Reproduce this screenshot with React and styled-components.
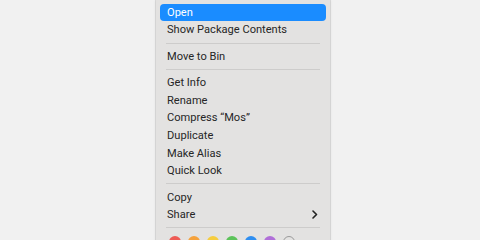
import React from "react";
import styled, { createGlobalStyle } from "styled-components";

const Global = createGlobalStyle`
  html, body { margin: 0; padding: 0; background: #f1f1f1; }
  body { width: 480px; height: 240px; overflow: hidden; font-family: "Roboto", "Liberation Sans", sans-serif; }
`;

const Page = styled.div`
  width: 480px;
  height: 240px;
  display: flex;
  justify-content: flex-start;
  padding-left: 156px;
  box-sizing: border-box;
  overflow: hidden;
`;

const Menu = styled.div`
  width: 174px;
  height: 260px;
  background: #e3e2e1;
  border-radius: 0 0 7px 7px;
  box-shadow: 0 0 0 1px rgba(0,0,0,0.08), 0 0 3px rgba(0,0,0,0.12);
  padding: 3.6px 4px 0 4px;
  box-sizing: border-box;
  display: flex;
  flex-direction: column;
`;

const Item = styled.div`
  height: 17.6px;
  display: flex;
  align-items: center;
  justify-content: space-between;
  padding: 0 8px 0 7px;
  border-radius: 4px;
  font-size: 11.1px;
  letter-spacing: 0;
  color: ${p => (p.$active ? "#ffffff" : "#262626")};
  background: ${p => (p.$active ? "#1a8cff" : "transparent")};
`;

const Sep = styled.div`
  height: 8.8px;
  display: flex;
  align-items: center;
  padding: 0 6px;
  &::after {
    content: "";
    flex: 1;
    height: 1px;
    background: #cdcccb;
  }
`;

const Dots = styled.div`
  display: flex;
  gap: 7px;
  padding: 4px 0 0 9px;
`;

const Dot = styled.span`
  width: 12px;
  height: 12px;
  border-radius: 50%;
  box-sizing: border-box;
  background: ${p => p.$c};
  border: ${p => (p.$outline ? "1px solid #9a9a9a" : "none")};
`;

const Chevron = () => (
  <svg width="6" height="9" viewBox="0 0 6 9">
    <path d="M1 1 L4.5 4.5 L1 8" fill="none" stroke="#222" strokeWidth="1.6" strokeLinecap="round" strokeLinejoin="round" />
  </svg>
);

export default function App() {
  return (
    <>
      <Global />
      <Page>
        <Menu>
          <Item $active>Open</Item>
          <Item>Show Package Contents</Item>
          <Sep />
          <Item>Move to Bin</Item>
          <Sep />
          <Item>Get Info</Item>
          <Item>Rename</Item>
          <Item>Compress “Mos”</Item>
          <Item>Duplicate</Item>
          <Item>Make Alias</Item>
          <Item>Quick Look</Item>
          <Sep />
          <Item>Copy</Item>
          <Item>Share<Chevron /></Item>
          <Sep />
          <Dots>
            <Dot $c="#ee5b55" />
            <Dot $c="#f5a23c" />
            <Dot $c="#f6cd3f" />
            <Dot $c="#5cc35a" />
            <Dot $c="#2f8ef0" />
            <Dot $c="#b06fd8" />
            <Dot $c="transparent" $outline />
          </Dots>
        </Menu>
      </Page>
    </>
  );
}
